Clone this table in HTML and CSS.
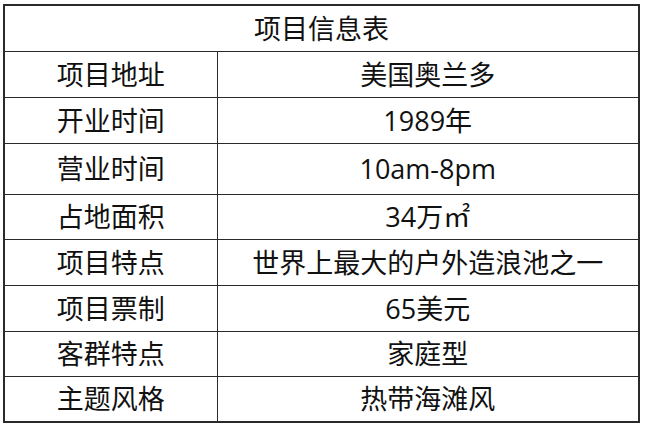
FILE: index.html
```html
<!DOCTYPE html>
<html lang="zh">
<head>
<meta charset="utf-8">
<link rel="stylesheet" href="styles.css">
</head>
<body>
<table class="info">
  <colgroup><col class="c1"><col class="c2"></colgroup>
  <tr class="r46"><th colspan="2">项目信息表</th></tr>
  <tr class="r46"><td>项目地址</td><td>美国奥兰多</td></tr>
  <tr class="r46"><td>开业时间</td><td>1989年</td></tr>
  <tr class="r51"><td>营业时间</td><td>10am-8pm</td></tr>
  <tr class="r45"><td>占地面积</td><td>34万㎡</td></tr>
  <tr class="r46"><td>项目特点</td><td>世界上最大的户外造浪池之一</td></tr>
  <tr class="r46"><td>项目票制</td><td>65美元</td></tr>
  <tr class="r45"><td>客群特点</td><td>家庭型</td></tr>
  <tr class="r46"><td>主题风格</td><td>热带海滩风</td></tr>
</table>
</body>
</html>
```
FILE: styles.css
```css
html, body {
  margin: 0;
  padding: 0;
  background: #ffffff;
}
body {
  padding: 4px 0 0 3px;
}
.info {
  border-collapse: collapse;
  width: 637px;
  table-layout: fixed;
  border: 2px solid #2a2a2a;
  font-family: "Open Sans", "Noto Sans CJK SC", sans-serif;
  font-size: 27px;
  color: #111111;
}
.c1 { width: 213px; }
.info th,
.info td {
  border: 1.5px solid #2a2a2a;
  padding: 0;
  text-align: center;
  vertical-align: middle;
  font-weight: normal;
  line-height: 1;
}
.r46 { height: 46px; }
.r51 { height: 51px; }
.r45 { height: 45px; }
```
